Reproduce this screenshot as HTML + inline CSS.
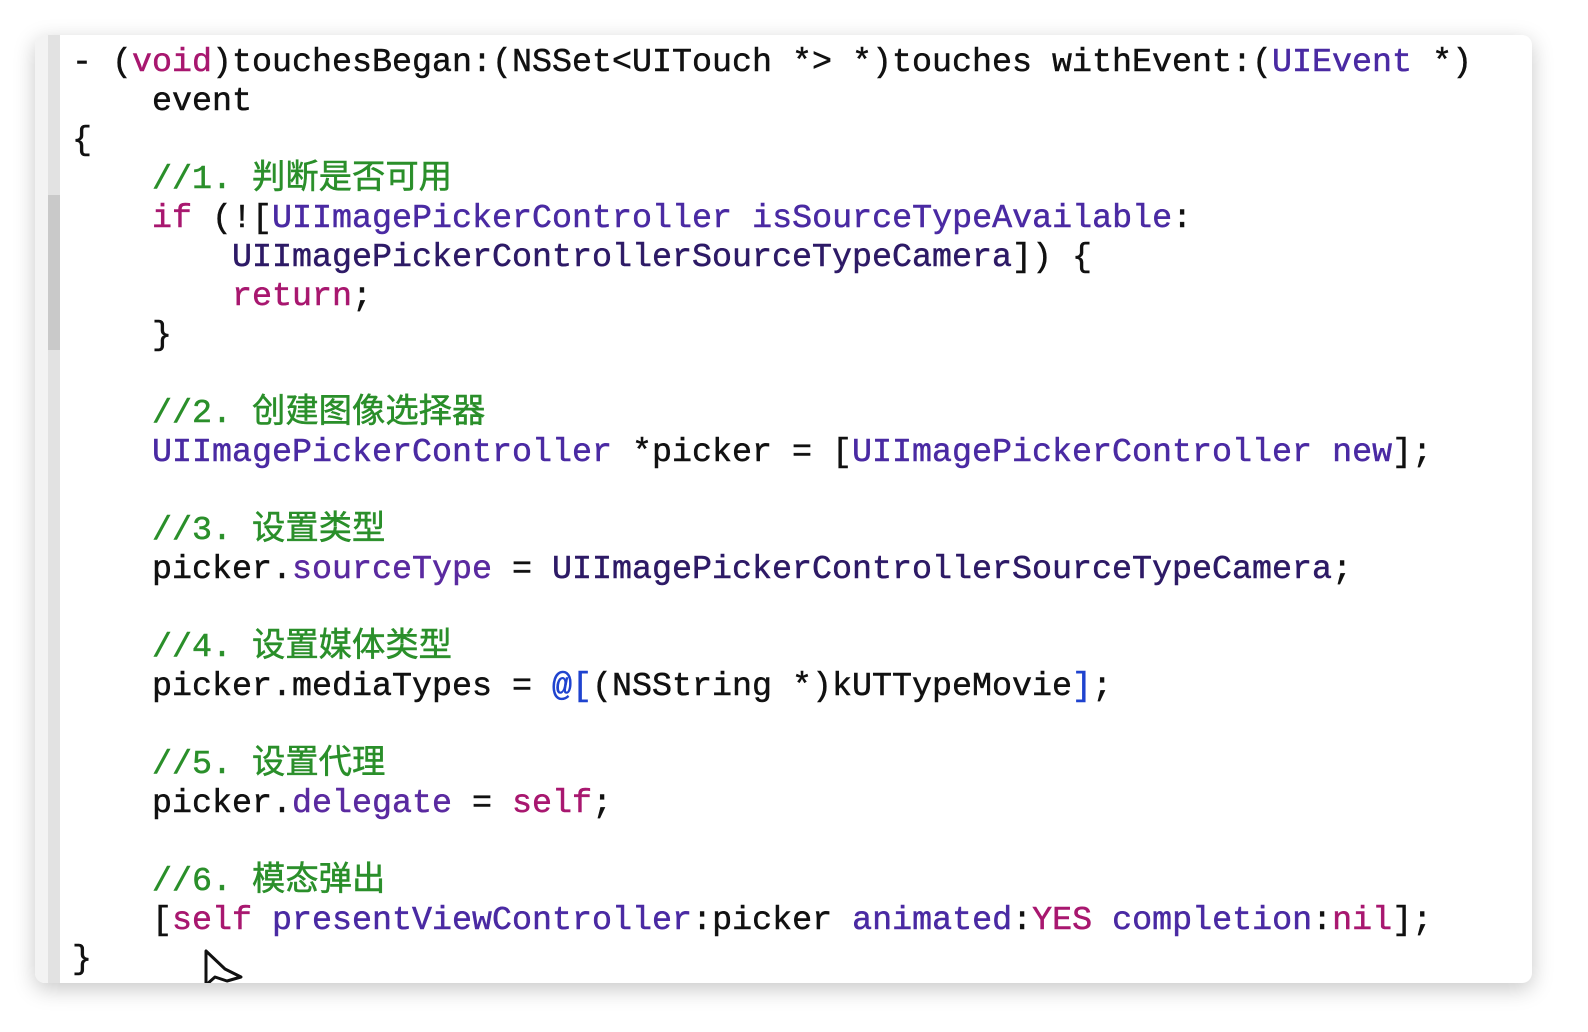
<!DOCTYPE html>
<html><head><meta charset="utf-8"><style>
html,body{margin:0;padding:0;width:1588px;height:1032px;background:#fff;overflow:hidden}
.card{position:absolute;left:35px;top:35px;width:1497px;height:948px;background:#fff;border-radius:10px;box-shadow:0 6px 22px rgba(0,0,0,0.22);overflow:hidden}
.gut{position:absolute;left:0;top:0;width:13px;height:948px;background:#f3f3f3}
.bar{position:absolute;left:13px;top:0;width:12px;height:948px;background:#e2e2e2}
.bar2{position:absolute;left:13px;top:160px;width:12px;height:155px;background:#c9c9c9}
pre{position:absolute;left:37px;top:9px;margin:0;font-family:"Liberation Mono","Noto Sans CJK SC",monospace;font-size:33.33px;line-height:39px;color:#111;letter-spacing:0;-webkit-text-stroke:0.5px currentColor}
.k{color:#a8176f}.c{color:#2a8f2a}.t{color:#4a2aa3}.d{color:#2d1a66}.p{color:#5a2aa0}.b{color:#1f43cf}
</style></head><body>
<div class="card">
<div class="gut"></div><div class="bar"></div><div class="bar2"></div>
<pre>- (<span class="k">void</span>)touchesBegan:(NSSet&lt;UITouch *&gt; *)touches withEvent:(<span class="t">UIEvent</span> *)
    event
{
    <span class="c">//1. 判断是否可用</span>
    <span class="k">if</span> (![<span class="t">UIImagePickerController</span> <span class="t">isSourceTypeAvailable</span>:
        <span class="d">UIImagePickerControllerSourceTypeCamera</span>]) {
        <span class="k">return</span>;
    }

    <span class="c">//2. 创建图像选择器</span>
    <span class="t">UIImagePickerController</span> *picker = [<span class="t">UIImagePickerController</span> <span class="t">new</span>];

    <span class="c">//3. 设置类型</span>
    picker.<span class="p">sourceType</span> = <span class="d">UIImagePickerControllerSourceTypeCamera</span>;

    <span class="c">//4. 设置媒体类型</span>
    picker.mediaTypes = <span class="b">@[</span>(NSString *)kUTTypeMovie<span class="b">]</span>;

    <span class="c">//5. 设置代理</span>
    picker.<span class="p">delegate</span> = <span class="k">self</span>;

    <span class="c">//6. 模态弹出</span>
    [<span class="k">self</span> <span class="t">presentViewController</span>:picker <span class="t">animated</span>:<span class="k">YES</span> <span class="t">completion</span>:<span class="k">nil</span>];
}</pre>
<svg style="position:absolute;left:168px;top:912px" width="50" height="40"><path d="M3 4 L3 38 L12 30 L24 34 L38 30 L22 22 Z" fill="#fff" stroke="#111" stroke-width="3" stroke-linejoin="round"/></svg>
</div>
</body></html>
